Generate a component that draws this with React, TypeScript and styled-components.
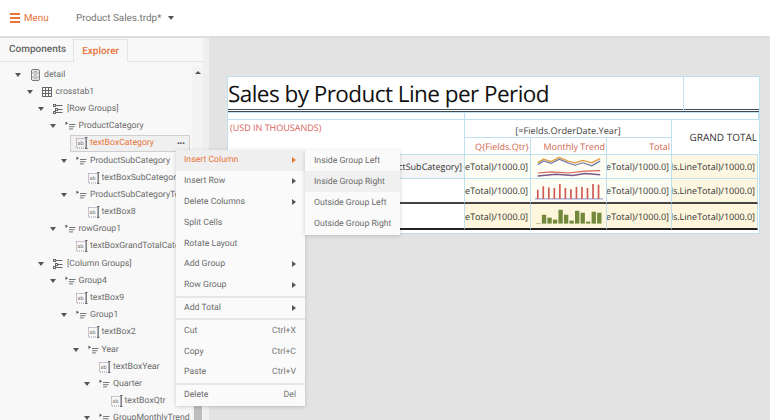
import styled, { createGlobalStyle } from "styled-components";

const orange = "#e8743b";
const grey = "#6b6b6b";
const cellLine = "#bfe0ee";

const GlobalStyle = createGlobalStyle`
	html, body {
		margin: 0;
		height: 100%;
		background: #e3e3e3;
		overflow: hidden;
		text-rendering: geometricPrecision;
	}
	#root {
		height: 100%;
	}
`;

type IconKind = "detail" | "table" | "groups" | "group" | "textbox";

interface TreeItem {
	label: string;
	level: number;
	icon: IconKind;
	open?: boolean;
	selected?: boolean;
}

const treeItems: TreeItem[] = [
	{ label: "detail", level: 0, icon: "detail", open: true },
	{ label: "crosstab1", level: 1, icon: "table", open: true },
	{ label: "[Row Groups]", level: 2, icon: "groups", open: true },
	{ label: "ProductCategory", level: 3, icon: "group", open: true },
	{ label: "textBoxCategory", level: 4, icon: "textbox", selected: true },
	{ label: "ProductSubCategory", level: 4, icon: "group", open: true },
	{ label: "textBoxSubCategory", level: 5, icon: "textbox" },
	{ label: "ProductSubCategoryTotal", level: 4, icon: "group", open: true },
	{ label: "textBox8", level: 5, icon: "textbox" },
	{ label: "rowGroup1", level: 3, icon: "group", open: true },
	{ label: "textBoxGrandTotalCategory", level: 4, icon: "textbox" },
	{ label: "[Column Groups]", level: 2, icon: "groups", open: true },
	{ label: "Group4", level: 3, icon: "group", open: true },
	{ label: "textBox9", level: 4, icon: "textbox" },
	{ label: "Group1", level: 4, icon: "group", open: true },
	{ label: "textBox2", level: 5, icon: "textbox" },
	{ label: "Year", level: 5, icon: "group", open: true },
	{ label: "textBoxYear", level: 6, icon: "textbox" },
	{ label: "Quarter", level: 6, icon: "group", open: true },
	{ label: "textBoxQtr", level: 7, icon: "textbox" },
	{ label: "GroupMonthlyTrend", level: 6, icon: "group", open: true },
];

const menuGroups = [
	[
		{ label: "Insert Column", sub: true, active: true },
		{ label: "Insert Row", sub: true },
		{ label: "Delete Columns", sub: true },
		{ label: "Split Cells" },
		{ label: "Rotate Layout" },
		{ label: "Add Group", sub: true },
		{ label: "Row Group", sub: true },
	],
	[{ label: "Add Total", sub: true }],
	[
		{ label: "Cut", shortcut: "Ctrl+X" },
		{ label: "Copy", shortcut: "Ctrl+C" },
		{ label: "Paste", shortcut: "Ctrl+V" },
	],
	[{ label: "Delete", shortcut: "Del" }],
] as { label: string; sub?: boolean; active?: boolean; shortcut?: string }[][];

const subItems = ["Inside Group Left", "Inside Group Right", "Outside Group Left", "Outside Group Right"];

function TreeIcon({ kind }: { kind: IconKind }) {
	if (kind === "detail") {
		return (
			<svg width="14" height="14" viewBox="0 0 14 14" fill="none" stroke="#777" strokeWidth="1">
				<rect x="1.5" y="1.5" width="8" height="11" rx="1.5" />
				<path d="M1.5 5h8M1.5 9h8M3.5 3.3h4M3.5 7h4M3.5 10.8h4" stroke="#999" />
			</svg>
		);
	}
	if (kind === "table") {
		return (
			<svg width="14" height="14" viewBox="0 0 14 14" fill="none" stroke="#666" strokeWidth="1">
				<rect x="0.5" y="2.5" width="9" height="9" />
				<path d="M3.5 2.5v9M6.5 2.5v9M0.5 5.5h9M0.5 8.5h9" />
			</svg>
		);
	}
	if (kind === "groups") {
		return (
			<svg width="14" height="14" viewBox="0 0 14 14" fill="none" stroke="#666" strokeWidth="1">
				<rect x="0.5" y="2.5" width="2" height="2" />
				<rect x="2.5" y="6.5" width="2" height="2" />
				<rect x="0.5" y="9.5" width="2" height="2" />
				<path d="M3 3.5h6.5M5 7.5h4.5M3 10.5h6.5" />
			</svg>
		);
	}
	if (kind === "group") {
		return (
			<svg width="14" height="14" viewBox="0 0 14 14" fill="none">
				<path d="M0.5 2.5l2.5 1.7-2.5 1.7z" fill="#555" />
				<path d="M4 5.5h6.5M4 7.7h5.5M4 9.9h4" stroke="#777" strokeWidth="1" />
			</svg>
		);
	}
	return (
		<svg width="14" height="14" viewBox="0 0 14 14" fill="none">
			<rect x="0.5" y="2.5" width="9" height="9.5" stroke="#a08aa8" strokeWidth="1" strokeDasharray="1 1" />
			<text x="1.5" y="9.4" fontSize="5.5" fontFamily="Roboto, sans-serif" fill="#777">
				ab
			</text>
			<path d="M9 1.5h2.5M9 12.5h2.5M10.3 1.5v11" stroke="#666" strokeWidth="1" />
		</svg>
	);
}

function TreeRow({ item }: { item: TreeItem }) {
	return (
		<Row $level={item.level} $leaf={!item.open} $selected={item.selected}>
			{item.open && <Caret />}
			<IconSlot>
				<TreeIcon kind={item.icon} />
			</IconSlot>
			<RowLabel>{item.label}</RowLabel>
			{item.selected && <Dots>•••</Dots>}
		</Row>
	);
}

function LineTrend() {
	return (
		<svg width="76" height="24" viewBox="0 0 90 80" preserveAspectRatio="none" fill="none">
			<path d="M16 26L30 14L48 22L68 8L88 20L106 26L124 18L146 26L166 12" transform="scale(.5 1)" stroke="#e39a3b" strokeWidth="4" />
			<path d="M16 32L30 20L48 28L68 14L88 26L106 34L124 26L146 36L166 20" transform="scale(.5 1)" stroke="#6f7ba8" strokeWidth="4" />
			<path d="M16 60L50 56L90 60L130 54L166 52" transform="scale(.5 1)" stroke="#d9645a" strokeWidth="4" />
			<path d="M16 70L60 64L100 68L130 62L166 66" transform="scale(.5 1)" stroke="#7a5a8a" strokeWidth="5" />
		</svg>
	);
}

const redBars = [16, 22, 20, 19, 26, 19, 17, 21, 21, 19, 26, 25];
const greenBars = [9, 6, 4, 14, 9, 3, 13, 11, 2, 12, 11];

function RedBars() {
	return (
		<svg width="76" height="24" viewBox="0 0 76 24" fill="none">
			<path d="M4 20H73" stroke="#8a8ad0" strokeWidth="1" />
			{redBars.map((h, i) => (
				<rect key={i} x={6 + i * 5.6} y={20 - h * 0.58} width="1.7" height={h * 0.58} fill="#cf5a52" />
			))}
		</svg>
	);
}

function GreenBars() {
	return (
		<svg width="76" height="24" viewBox="0 0 76 24" fill="none">
			<path d="M5 19.7H10" stroke="#b9c48a" strokeWidth="1" />
			{greenBars.map((h, i) => (
				<rect key={i} x={11 + i * 5.6} y={19.7 - h} width="4.4" height={h} fill="#72893b" />
			))}
		</svg>
	);
}

export default function App() {
	return (
		<Page>
			<GlobalStyle />
			<Header>
				<MenuButton>
					<Burger>
						<span />
						<span />
						<span />
					</Burger>
					Menu
				</MenuButton>
				<FileName>Product Sales.trdp*</FileName>
				<FileCaret />
			</Header>
			<Body>
				<SidePanel>
					<Tabs>
						<TabItem>Components</TabItem>
						<TabItem $active>Explorer</TabItem>
					</Tabs>
					<TreeArea>
						<TreeList>
							{treeItems.map((item) => (
								<TreeRow key={item.label} item={item} />
							))}
						</TreeList>
						<ScrollTrack>
							<ScrollArrow />
							<ScrollThumb />
						</ScrollTrack>
					</TreeArea>
				</SidePanel>
				<Gutter />
				<Surface>
					<Report>
						<TitleRow>
							<Title>Sales by Product Line per Period</Title>
							<TitleSide />
						</TitleRow>
						<DoubleRule />
						<SpacerRow>
							<SpacerCell />
							<SpacerCell />
						</SpacerRow>
						<Crosstab>
							<Corner>(USD IN THOUSANDS)</Corner>
							<YearCell>[=Fields.OrderDate.Year]</YearCell>
							<GrandCell>GRAND TOTAL</GrandCell>
							<HeadCell>Q{"{Fields.Qtr}"}</HeadCell>
							<HeadCell>Monthly Trend</HeadCell>
							<HeadCell>Total</HeadCell>

							<DataCell $bg="#f5f5f5">[=Fields.ProductSubCategory]</DataCell>
							<DataCell $bg="#fdfdf3">[=Sum(Fields.LineTotal)/1000.0]</DataCell>
							<ChartCell $bg="#fdfdf3">
								<LineTrend />
							</ChartCell>
							<DataCell $bg="#fdfdf3">[=Sum(Fields.LineTotal)/1000.0]</DataCell>
							<DataCell $bg="#fdf6e0">[=Sum(Fields.LineTotal)/1000.0]</DataCell>

							<DataCell $bg="#fff" $rule="#444" />
							<DataCell $bg="#fdfdf3" $rule="#444">[=Sum(Fields.LineTotal)/1000.0]</DataCell>
							<ChartCell $bg="#fdfdf3" $rule="#444">
								<RedBars />
							</ChartCell>
							<DataCell $bg="#fdfdf3" $rule="#444">[=Sum(Fields.LineTotal)/1000.0]</DataCell>
							<DataCell $bg="#fdf6e0" $rule="#444">[=Sum(Fields.LineTotal)/1000.0]</DataCell>

							<DataCell $bg="#fff" $rule="#222" />
							<DataCell $bg="#fdf6dc" $rule="#222">[=Sum(Fields.LineTotal)/1000.0]</DataCell>
							<ChartCell $bg="#fdf6dc" $rule="#222">
								<GreenBars />
							</ChartCell>
							<DataCell $bg="#fdf6dc" $rule="#222">[=Sum(Fields.LineTotal)/1000.0]</DataCell>
							<DataCell $bg="#fdf6dc" $rule="#222">[=Sum(Fields.LineTotal)/1000.0]</DataCell>
						</Crosstab>
					</Report>
				</Surface>
				<ContextMenu>
					{menuGroups.map((group, index) => (
						<MenuGroup key={index} $first={index === 0}>
							{group.map((entry) => (
								<MenuItem key={entry.label} $active={entry.active}>
									{entry.label}
									{entry.sub && <SubArrow $active={entry.active} />}
									{entry.shortcut && <Shortcut>{entry.shortcut}</Shortcut>}
								</MenuItem>
							))}
						</MenuGroup>
					))}
				</ContextMenu>
				<SubMenu>
					{subItems.map((label, index) => (
						<SubItem key={label} $hover={index === 1}>
							{label}
						</SubItem>
					))}
				</SubMenu>
			</Body>
		</Page>
	);
}

const Page = styled.div`
	width: 770px;
	height: 420px;
	display: flex;
	flex-direction: column;
	overflow: hidden;
	font-family: Roboto, sans-serif;
	font-size: 8.7px;
	color: ${grey};
`;

const Header = styled.header`
	height: 36px;
	flex: none;
	display: flex;
	align-items: center;
	padding: 0 0 0 10px;
	background: #fff;
	border-bottom: 2px solid #dcdcdc;
`;

const MenuButton = styled.div`
	display: flex;
	align-items: center;
	gap: 4px;
	width: 66px;
	font-size: 9.8px;
	color: ${orange};
`;

const Burger = styled.div`
	width: 10px;
	display: flex;
	flex-direction: column;
	gap: 2px;
	span {
		display: block;
		height: 1.7px;
		background: ${orange};
	}
`;

const FileName = styled.div`
	font-size: 9.9px;
	color: #777;
`;

const FileCaret = styled.div`
	margin-left: 7px;
	width: 0;
	height: 0;
	border-left: 3px solid transparent;
	border-right: 3px solid transparent;
	border-top: 4px solid #555;
`;

const Body = styled.div`
	position: relative;
	flex: 1;
	min-height: 0;
	display: flex;
`;

const SidePanel = styled.aside`
	width: 203px;
	flex: none;
	display: flex;
	flex-direction: column;
	background: #f8f8f8;
`;

const Tabs = styled.div`
	height: 24px;
	flex: none;
	display: flex;
	align-items: flex-end;
	padding-left: 1px;
	border-bottom: 1px solid #e4e4e4;
	box-sizing: border-box;
`;

const TabItem = styled.div<{ $active?: boolean }>`
	height: 23px;
	box-sizing: border-box;
	padding: 0 8px 0 8px;
	display: flex;
	align-items: center;
	font-size: 10px;
	font-weight: 500;
	color: ${(p) => (p.$active ? orange : "#666")};
	${(p) => (p.$active ? "background: #f8f8f8; border: 1px solid #e4e4e4; border-bottom: none; margin-bottom: -1px; height: 23px; margin-left: -1px;" : "")}
`;

const TreeArea = styled.div`
	flex: 1;
	min-height: 0;
	display: flex;
	padding-top: 4px;
`;

const TreeList = styled.div`
	flex: 1;
	min-width: 0;
	overflow: hidden;
`;

const Row = styled.div<{ $level: number; $leaf: boolean; $selected?: boolean }>`
	height: 17.2px;
	box-sizing: border-box;
	display: flex;
	align-items: center;
	white-space: nowrap;
	padding-left: ${(p) => (p.$leaf ? 30 : 15) + p.$level * 11.5}px;
	${(p) =>
		p.$selected &&
		`
		margin-left: 70px;
		width: 120px;
		padding-left: 5px;
		background: #f0f0f0;
		border: 1px solid #cfcfcf;
		color: ${orange};
	`}
`;

const Caret = styled.span`
	flex: none;
	width: 0;
	height: 0;
	margin-right: 9px;
	border-left: 3px solid transparent;
	border-right: 3px solid transparent;
	border-top: 4px solid #555;
`;

const IconSlot = styled.span`
	flex: none;
	width: 14px;
	height: 14px;
	svg {
		display: block;
	}
`;

const RowLabel = styled.span`
	font-size: 8.7px;
`;

const Dots = styled.span`
	margin-left: auto;
	padding-right: 4px;
	font-size: 8px;
	color: #444;
`;

const ScrollTrack = styled.div`
	width: 11px;
	flex: none;
	display: flex;
	flex-direction: column;
	align-items: center;
	background: #f3f3f3;
`;

const ScrollArrow = styled.div`
	margin-top: 5px;
	width: 0;
	height: 0;
	border-left: 3px solid transparent;
	border-right: 3px solid transparent;
	border-bottom: 3px solid #555;
`;

const ScrollThumb = styled.div`
	margin-top: auto;
	width: 8px;
	height: 120px;
	background: #bdbdbd;
`;

const Gutter = styled.div`
	width: 6px;
	flex: none;
	background: #efefef;
`;

const Surface = styled.main`
	flex: 1;
	min-width: 0;
	padding: 38px 0 0 18px;
	background: #e3e3e3;
`;

const Report = styled.div`
	width: 533px;
	height: 158px;
	box-sizing: border-box;
	background: #fff;
	border: 1px solid ${cellLine};
	font-family: "Open Sans", sans-serif;
	color: #333;
`;

const TitleRow = styled.div`
	height: 32px;
	display: grid;
	grid-template-columns: 456px 1fr;
`;

const Title = styled.div`
	font-size: 22.5px;
	letter-spacing: -0.55px;
	line-height: 34px;
	color: #111;
	white-space: nowrap;
	border-right: 1px solid ${cellLine};
`;

const TitleSide = styled.div``;

const DoubleRule = styled.div`
	height: 3px;
	box-sizing: border-box;
	border-top: 1px solid #3f4a52;
	border-bottom: 1px solid #3f4a52;
`;

const SpacerRow = styled.div`
	height: 8px;
	box-sizing: border-box;
	display: grid;
	grid-template-columns: 237px 1fr;
	border-top: 1px solid ${cellLine};
	border-bottom: 1px solid ${cellLine};
`;

const SpacerCell = styled.div`
	border-right: 1px solid ${cellLine};
`;

const Crosstab = styled.div`
	display: grid;
	grid-template-columns: 238px 66px 76px 65px 86px;
	grid-template-rows: 18px 17px 24px 25px 26px;
	margin-left: -1px;
	width: 532px;
`;

const BaseCell = styled.div`
	box-sizing: border-box;
	min-width: 0;
	overflow: hidden;
	white-space: nowrap;
	display: flex;
	align-items: center;
	border-right: 1px solid ${cellLine};
	border-bottom: 1px solid ${cellLine};
`;

const Corner = styled(BaseCell)`
	grid-row: span 2;
	align-items: flex-start;
	padding: 1px 0 0 3px;
	font-size: 9px;
	line-height: 14px;
	color: #d9605a;
`;

const YearCell = styled(BaseCell)`
	grid-column: span 3;
	justify-content: center;
	padding-top: 4px;
	font-size: 9.2px;
	color: #444;
`;

const GrandCell = styled(BaseCell)`
	grid-row: span 2;
	justify-content: flex-end;
	padding-right: 1px;
	font-size: 10px;
	color: #333;
	border-right: none;
`;

const HeadCell = styled(BaseCell)`
	justify-content: flex-end;
	padding-right: 1px;
	font-size: 9px;
	color: #d2664c;
`;

const DataCell = styled(BaseCell)<{ $bg: string; $rule?: string }>`
	justify-content: flex-end;
	padding-right: 2px;
	font-size: 9px;
	color: #333;
	background: ${(p) => p.$bg};
	${(p) => p.$rule && `border-bottom: 2px solid ${p.$rule};`}
`;

const ChartCell = styled(BaseCell)<{ $bg: string; $rule?: string }>`
	align-items: flex-start;
	background: ${(p) => p.$bg};
	${(p) => p.$rule && `border-bottom: 2px solid ${p.$rule};`}
`;

const ContextMenu = styled.div`
	position: absolute;
	left: 176px;
	top: 112px;
	width: 129px;
	background: #fafafa;
	box-shadow: 0 1px 4px rgba(0, 0, 0, 0.18);
`;

const MenuGroup = styled.div<{ $first?: boolean }>`
	${(p) => !p.$first && "border-top: 2px solid #e6e6e6;"}
`;

const MenuItem = styled.div<{ $active?: boolean }>`
	height: 20.8px;
	box-sizing: border-box;
	display: flex;
	align-items: center;
	justify-content: space-between;
	padding: 0 9px 0 8px;
	font-size: 8.7px;
	color: ${(p) => (p.$active ? orange : "#6b6b6b")};
	background: ${(p) => (p.$active ? "#efefef" : "transparent")};
`;

const SubArrow = styled.span<{ $active?: boolean }>`
	width: 0;
	height: 0;
	border-top: 3px solid transparent;
	border-bottom: 3px solid transparent;
	border-left: 4px solid ${(p) => (p.$active ? orange : "#555")};
`;

const Shortcut = styled.span`
	color: #777;
`;

const SubMenu = styled.div`
	position: absolute;
	left: 305px;
	top: 112px;
	width: 95px;
	background: #fafafa;
	box-shadow: 0 1px 4px rgba(0, 0, 0, 0.18);
`;

const SubItem = styled.div<{ $hover?: boolean }>`
	height: 21.2px;
	display: flex;
	align-items: center;
	padding-left: 9px;
	font-size: 8.7px;
	white-space: nowrap;
	color: #6b6b6b;
	background: ${(p) => (p.$hover ? "#f0f0f0" : "transparent")};
`;
